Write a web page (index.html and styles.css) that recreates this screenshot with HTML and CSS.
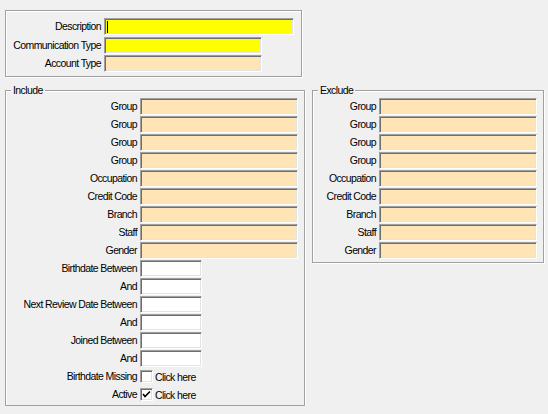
FILE: index.html
```html
<!DOCTYPE html>
<html lang="en">
<head>
    <meta charset="UTF-8">
    <title>Communication Filter</title>
    <link rel="stylesheet" href="styles.css">
</head>
<body>
    <div class="panel top-panel">
        <div class="rows top-rows">
            <label>Description</label>
            <div class="field required wide"><span class="caret"></span></div>
            <label>Communication Type</label>
            <div class="field required"></div>
            <label>Account Type</label>
            <div class="field"></div>
        </div>
    </div>

    <div class="groups">
        <div class="panel group include">
            <span class="legend">Include</span>
            <div class="rows">
                <label>Group</label><div class="field"></div>
                <label>Group</label><div class="field"></div>
                <label>Group</label><div class="field"></div>
                <label>Group</label><div class="field"></div>
                <label>Occupation</label><div class="field"></div>
                <label>Credit Code</label><div class="field"></div>
                <label>Branch</label><div class="field"></div>
                <label>Staff</label><div class="field"></div>
                <label>Gender</label><div class="field"></div>
                <label>Birthdate Between</label><div class="field date"></div>
                <label>And</label><div class="field date"></div>
                <label>Next Review Date Between</label><div class="field date"></div>
                <label>And</label><div class="field date"></div>
                <label>Joined Between</label><div class="field date"></div>
                <label>And</label><div class="field date"></div>
                <label>Birthdate Missing</label>
                <div class="check-row"><span class="checkbox"></span>Click here</div>
                <label>Active</label>
                <div class="check-row">
                    <span class="checkbox">
                        <svg width="9" height="9" viewBox="0 0 9 9"><path d="M1 4 L3 6.5 L8 1.5" fill="none" stroke="#000" stroke-width="1.6"/></svg>
                    </span>Click here
                </div>
            </div>
        </div>

        <div class="panel group exclude">
            <span class="legend">Exclude</span>
            <div class="rows">
                <label>Group</label><div class="field"></div>
                <label>Group</label><div class="field"></div>
                <label>Group</label><div class="field"></div>
                <label>Group</label><div class="field"></div>
                <label>Occupation</label><div class="field"></div>
                <label>Credit Code</label><div class="field"></div>
                <label>Branch</label><div class="field"></div>
                <label>Staff</label><div class="field"></div>
                <label>Gender</label><div class="field"></div>
            </div>
        </div>
    </div>
</body>
</html>
```

FILE: styles.css
```css
* {
    margin: 0;
    padding: 0;
    box-sizing: border-box;
}

body {
    background: #f0f0f0;
    font-family: 'Liberation Sans', Arial, sans-serif;
    font-size: 10.5px;
    letter-spacing: -0.6px;
    color: #000;
}

/* etched frame like a windows group box */
.panel {
    border: 1px solid #a0a0a0;
    box-shadow: inset 1px 1px 0 #fff, 1px 1px 0 #fff;
    position: relative;
}

.top-panel {
    width: 297px;
    height: 67px;
    margin: 10px 0 0 5px;
    padding-top: 7px;
}

.rows {
    display: grid;
    grid-template-columns: 131px auto;
    column-gap: 3px;
    row-gap: 1px;
    align-items: center;
}

.rows label {
    text-align: right;
    white-space: nowrap;
    line-height: 17px;
}

.top-rows {
    grid-template-columns: 95px auto;
    row-gap: 1.5px;
}

.field {
    width: 158px;
    height: 17px;
    background: #ffe4b5;
    border: 1px solid;
    border-color: #a0a0a0 #fff #fff #a0a0a0;
    box-shadow: inset 1px 1px 0 #6e6e6e, inset -1px -1px 0 #e3e3e3;
    position: relative;
}

.field.required {
    background: #ffff00;
}

.field.wide {
    width: 190px;
}

.field.date {
    width: 62px;
    background: #fff;
}

.caret {
    position: absolute;
    left: 2px;
    top: 2px;
    width: 1px;
    height: 12px;
    background: #000;
}

.groups {
    display: flex;
    align-items: flex-start;
    margin-top: 13px;
}

.group {
    padding-top: 7px;
}

.include {
    width: 300px;
    margin-left: 5px;
    padding-bottom: 2px;
}

.exclude {
    width: 232px;
    margin-left: 7px;
    padding-bottom: 3px;
}

.exclude .rows {
    grid-template-columns: 63px auto;
}

.legend {
    position: absolute;
    top: -7px;
    left: 5px;
    padding: 0 2px;
    background: #f0f0f0;
    line-height: 13px;
}

.check-row {
    display: flex;
    align-items: center;
    gap: 2px;
    height: 17px;
}

.checkbox {
    width: 13px;
    height: 13px;
    background: #fff;
    border: 1px solid;
    border-color: #a0a0a0 #fff #fff #a0a0a0;
    box-shadow: inset 1px 1px 0 #6e6e6e, inset -1px -1px 0 #e3e3e3;
    display: flex;
    align-items: center;
    justify-content: center;
}
```
